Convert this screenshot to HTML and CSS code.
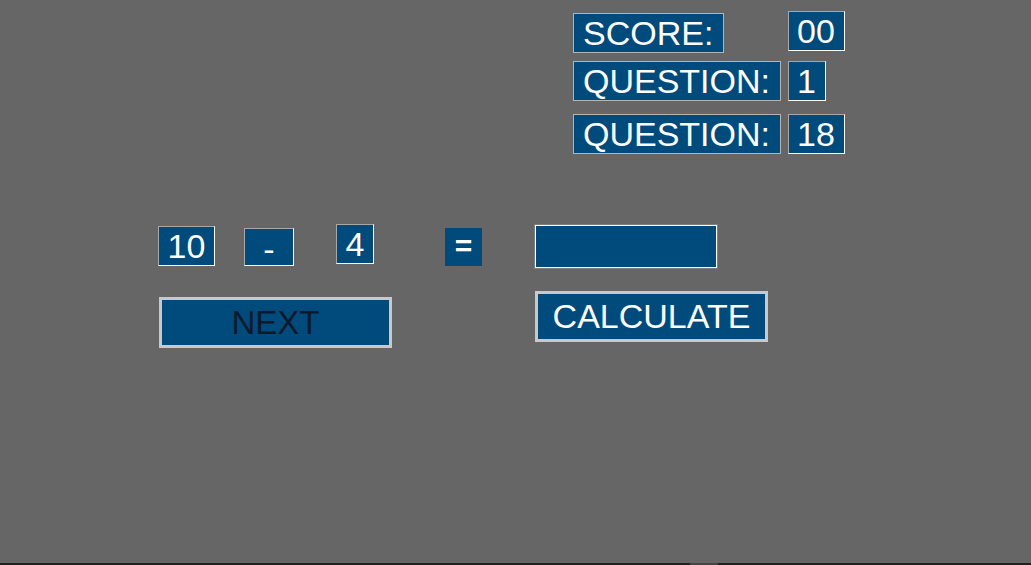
FILE: index.html
```html
<!DOCTYPE html>
<html>
<head>
<meta charset="utf-8">
<link rel="stylesheet" href="styles.css">
<title>Quiz</title>
</head>
<body>
<div class="screen">
  <section class="board">
    <div class="board-row row-score">
      <div class="label-cell"><span class="label">SCORE:</span></div>
      <span class="value">00</span>
    </div>
    <div class="board-row row-q1">
      <div class="label-cell"><span class="label">QUESTION:</span></div>
      <span class="value">1</span>
    </div>
    <div class="board-row row-q2">
      <div class="label-cell"><span class="label">QUESTION:</span></div>
      <span class="value">18</span>
    </div>
  </section>

  <section class="equation">
    <span class="value num-a">10</span>
    <span class="value op">-</span>
    <span class="value num-b">4</span>
    <span class="value eq">=</span>
    <input class="answer" type="text" aria-label="answer">
  </section>

  <section class="actions">
    <button class="btn btn-next">NEXT</button>
    <button class="btn btn-calc">CALCULATE</button>
  </section>

  <div class="taskbar"><span class="taskbar-mark"></span></div>
</div>
</body>
</html>
```

FILE: styles.css
```css
html, body {
  margin: 0;
  padding: 0;
}

body {
  background: #666666;
  font-family: "Liberation Sans", Arial, sans-serif;
  width: 1031px;
  height: 565px;
  overflow: hidden;
}

.screen {
  display: flex;
  flex-direction: column;
  height: 565px;
}

/* ---------- score board ---------- */
.board {
  display: flex;
  flex-direction: column;
  padding: 11px 0 0 573px;
}

.board-row {
  display: flex;
  align-items: flex-start;
}

.row-q1 { margin-top: 8px; }
.row-q2 { margin-top: 13px; }

.label-cell {
  width: 215px;
  display: flex;
}

.row-score .label { margin-top: 2px; }

.label {
  box-sizing: border-box;
  height: 40px;
  line-height: 38px;
  padding: 0 10px 0 9px;
  font-size: 34px;
  color: #ffffff;
  background: #004a7c;
  border: 1px solid #b4b4b4;
  white-space: nowrap;
}

.value {
  box-sizing: border-box;
  height: 40px;
  line-height: 38px;
  padding: 0 9px 0 8px;
  font-size: 34px;
  color: #ffffff;
  background: #004a7c;
  border: 1px solid;
  border-color: #a8a8a8 #ffffff #ffffff #a8a8a8;
  white-space: nowrap;
}

/* ---------- equation ---------- */
.equation {
  display: flex;
  align-items: flex-start;
  padding-left: 158px;
  margin-top: 70px;
}

.equation .value {
  padding: 0;
  text-align: center;
}

.num-a {
  width: 57px;
  margin-top: 2px;
}

.op {
  width: 50px;
  margin-top: 4px;
  margin-left: 29px;
  height: 38px;
  line-height: 40px;
}

.num-b {
  width: 38px;
  margin-left: 42px;
}

.eq {
  width: 37px;
  margin-top: 4px;
  margin-left: 71px;
  height: 38px;
  line-height: 34px;
  font-weight: bold;
  font-size: 30px;
  border-color: #004a7c;
}

.answer {
  box-sizing: border-box;
  margin: 1px 0 0 53px;
  width: 182px;
  height: 43px;
  padding: 0;
  background: #004a7c;
  border: 1px solid #ffffff;
  box-shadow: 0 0 0 1px #7e7e7e;
  outline: none;
  font-family: "Liberation Sans", Arial, sans-serif;
  font-size: 34px;
  color: #ffffff;
}

/* ---------- actions ---------- */
.actions {
  display: flex;
  align-items: flex-start;
  padding-left: 159px;
  margin-top: 23px;
}

.btn {
  box-sizing: border-box;
  width: 233px;
  height: 51px;
  padding: 0;
  background: #004a7c;
  border: 3px solid #c9c9c9;
  font-family: "Liberation Sans", Arial, sans-serif;
  font-size: 34px;
  line-height: 45px;
  text-align: center;
}

.btn-next {
  margin-top: 6px;
  color: #0b1a2b;
  font-size: 33px;
}

.btn-calc {
  margin-left: 143px;
  color: #ffffff;
}

/* ---------- bottom strip ---------- */
.taskbar {
  margin-top: auto;
  height: 2px;
  background: #1f1f1f;
  display: flex;
  padding-left: 690px;
}

.taskbar-mark {
  width: 28px;
  height: 2px;
  background: #444444;
}
```
